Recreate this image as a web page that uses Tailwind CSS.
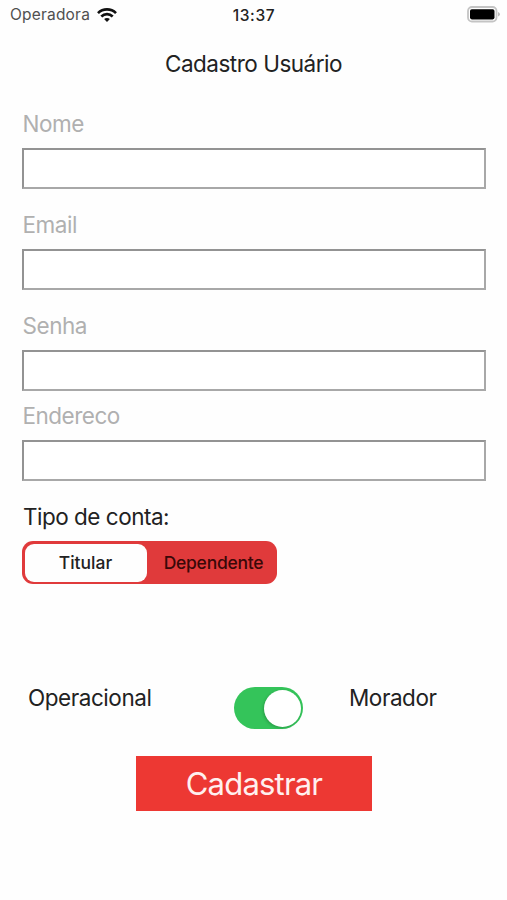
<!DOCTYPE html>
<html lang="pt-BR">
<head>
<meta charset="utf-8">
<title>Cadastro Usuário</title>
<script src="https://cdn.jsdelivr.net/npm/@tailwindcss/browser@4"></script>
</head>
<body class="bg-white font-['Inter',sans-serif] text-[#222]">
<main class="flex h-[900px] w-[507px] flex-col overflow-hidden bg-[#fefefe]">
  <header class="grid h-[30px] grid-cols-[1fr_auto_1fr] items-center pl-[10px] pr-[7px]">
    <div class="flex items-center gap-[7px]">
      <span class="text-[15.5px] tracking-[0.2px] text-[#505050]">Operadora</span>
      <svg class="-mt-px h-[14px] w-[20px]" viewBox="0 0 20 14" fill="none" stroke="#111" stroke-width="2.7">
        <path d="M1 5.1C6 .2 14 .2 19 5.1"/>
        <path d="M4.3 8.5C7.6 5.3 12.4 5.3 15.7 8.5"/>
        <path d="M7.1 11.1C8.7 9.5 11.3 9.5 12.9 11.1L10 14Z" fill="#111" stroke="none"/>
      </svg>
    </div>
    <span class="pt-px pr-[2px] text-[15.5px] font-medium tracking-[0.65px]">13:37</span>
    <svg class="-mt-[2px] h-[17px] w-[33px] justify-self-end" viewBox="0 0 33 17">
      <rect x="1" y="1" width="28.5" height="14.5" rx="4" fill="#fff" stroke="#c4c4c4" stroke-width="1.8"/>
      <rect x="3" y="3.2" width="24.5" height="10.2" rx="1.8" fill="#000"/>
      <path d="M31 6v4.5q2-.8 2-2.2T31 6Z" fill="#bbb"/>
    </svg>
  </header>
  <h1 class="mt-[18px] h-[30px] text-center text-[22.5px] leading-[31px] tracking-[-0.5px]">Cadastro Usuário</h1>
  <form class="flex flex-col pl-[22px] pr-[21px]">
    <label class="mt-[30px] h-[40px] pl-[0.5px] text-[22.5px] leading-[31px] tracking-[-0.45px] text-[#b0b0b0]">Nome</label>
    <input class="h-[41px] border-2 border-t-[#939393] border-l-[#939393] border-r-[#a8a8a8] border-b-[#a8a8a8] bg-white">
    <label class="mt-[20px] h-[40px] pl-[0.5px] text-[22.5px] leading-[31px] tracking-[-0.45px] text-[#b0b0b0]">Email</label>
    <input class="h-[41px] border-2 border-t-[#939393] border-l-[#939393] border-r-[#a8a8a8] border-b-[#a8a8a8] bg-white">
    <label class="mt-[20px] h-[40px] pl-[0.5px] text-[22.5px] leading-[31px] tracking-[-0.45px] text-[#b0b0b0]">Senha</label>
    <input class="h-[41px] border-2 border-t-[#939393] border-l-[#939393] border-r-[#a8a8a8] border-b-[#a8a8a8] bg-white">
    <label class="mt-[9px] h-[40px] pl-[0.5px] text-[22.5px] leading-[31px] tracking-[-0.5px] text-[#b0b0b0]">Endereco</label>
    <input class="h-[41px] border-2 border-t-[#939393] border-l-[#939393] border-r-[#a8a8a8] border-b-[#a8a8a8] bg-white">
    <p class="mt-[20px] h-[40px] pl-px text-[22.5px] leading-[31px] tracking-[-0.5px]">Tipo de conta:</p>
    <div class="flex h-[43px] w-[255px] rounded-[11px] bg-[#e03a3b] p-[2.5px] text-[17.5px] font-medium">
      <div class="flex w-[122px] items-center justify-center rounded-[9px] bg-[#fefefe] pt-px"><span>Titular</span></div>
      <div class="flex flex-1 items-center justify-center pt-px pl-[6px] tracking-[-0.25px] text-[#3a0808]"><span>Dependente</span></div>
    </div>
  </form>
  <div class="mt-[98px] flex h-[52px] items-start pl-[28px] text-[22.5px] leading-[31px] tracking-[-0.45px]">
    <span class="w-[206px]">Operacional</span>
    <div class="mt-[5px] flex h-[42px] w-[69px] items-center justify-end rounded-full bg-[#34c45a] pr-[2px]">
      <div class="size-[37px] rounded-full bg-white shadow-[-1px_1px_3px_#0003]"></div>
    </div>
    <span class="ml-[46px]">Morador</span>
  </div>
  <button class="mt-[22px] ml-[136px] h-[55px] w-[236px] bg-[#ed3833] pt-px text-[31px] tracking-[-0.8px] text-[#fff0ef]"><span>Cadastrar</span></button>
</main>
</body>
</html>
